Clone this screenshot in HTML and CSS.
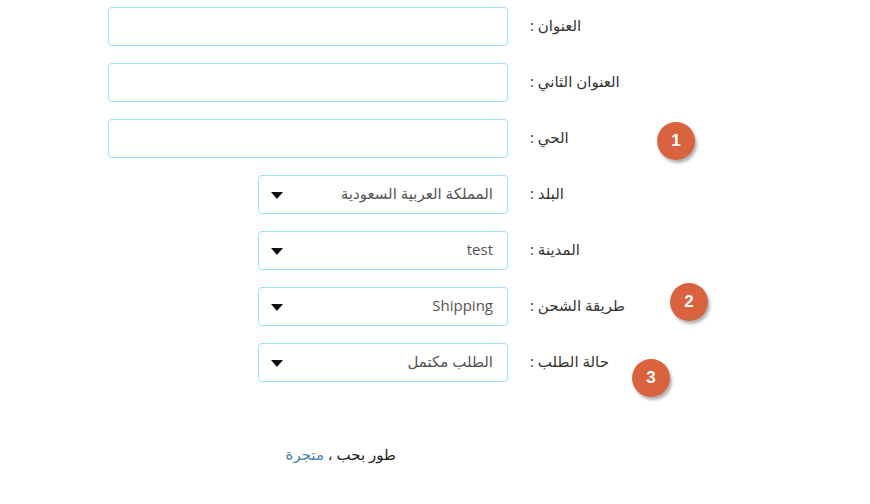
FILE: index.html
```html
<!DOCTYPE html>
<html lang="ar">
<head>
<meta charset="utf-8">
<link rel="stylesheet" href="styles.css">
</head>
<body>
<div class="page">
  <form class="form">
    <div class="field"><div class="input"></div></div>
    <label class="label">العنوان :</label>

    <div class="field"><div class="input"></div></div>
    <label class="label">العنوان الثاني :</label>

    <div class="field"><div class="input"></div></div>
    <label class="label">الحي :</label>

    <div class="field"><div class="select"><span class="arrow"></span><span class="value">المملكة العربية السعودية</span></div></div>
    <label class="label">البلد :</label>

    <div class="field"><div class="select"><span class="arrow"></span><span class="value">test</span></div></div>
    <label class="label">المدينة :</label>

    <div class="field"><div class="select"><span class="arrow"></span><span class="value">Shipping</span></div></div>
    <label class="label">طريقة الشحن :</label>

    <div class="field"><div class="select"><span class="arrow"></span><span class="value">الطلب مكتمل</span></div></div>
    <label class="label">حالة الطلب :</label>
  </form>

  <div class="footer">طور بحب ، <a class="link">متجرة</a></div>

  <span class="badge b1">1</span>
  <span class="badge b2">2</span>
  <span class="badge b3">3</span>
</div>
</body>
</html>
```

FILE: styles.css
```css
html, body {
  margin: 0;
  padding: 0;
  background: #ffffff;
}
body {
  font-family: "Open Sans", "DejaVu Sans", sans-serif;
  font-size: 15px;
  color: #333333;
}
.page {
  position: relative;
  width: 870px;
  height: 504px;
}
.form {
  display: grid;
  grid-template-columns: 400px auto;
  column-gap: 22px;
  row-gap: 17px;
  padding: 7px 0 0 108px;
  align-items: center;
}
.field {
  display: flex;
  justify-content: flex-end;
}
.input, .select {
  box-sizing: border-box;
  height: 39px;
  border: 1px solid #9fe0f6;
  border-radius: 4px;
  background: #fff;
}
.input {
  width: 400px;
}
.select {
  width: 250px;
  display: flex;
  align-items: center;
  justify-content: space-between;
  padding: 0 14px 0 12px;
  color: #555555;
}
.value {
  direction: rtl;
  line-height: 20px;
  padding-bottom: 3px;
}
.arrow {
  width: 0;
  height: 0;
  border-left: 6px solid transparent;
  border-right: 6px solid transparent;
  border-top: 7px solid #111;
  margin-top: 1px;
}
.label {
  direction: rtl;
  text-align: left;
  justify-self: start;
  line-height: 20px;
  padding-bottom: 3px;
  color: #333333;
}
.footer {
  margin: 62px 0 0 108px;
  width: 288px;
  direction: rtl;
  text-align: right;
  line-height: 20px;
  color: #222222;
  font-size: 15px;
}
.link {
  color: #4d82ad;
}
.badge {
  position: absolute;
  width: 38px;
  height: 38px;
  border-radius: 50%;
  background: #d9623f;
  color: #ffffff;
  font-family: "Liberation Sans", Arial, sans-serif;
  font-weight: bold;
  font-size: 17px;
  display: flex;
  align-items: center;
  justify-content: center;
  box-shadow: 2px 3px 3px rgba(0,0,0,0.3);
}
.b1 { left: 657px; top: 122px; }
.b2 { left: 670px; top: 283px; }
.b3 { left: 632px; top: 359px; }
```
